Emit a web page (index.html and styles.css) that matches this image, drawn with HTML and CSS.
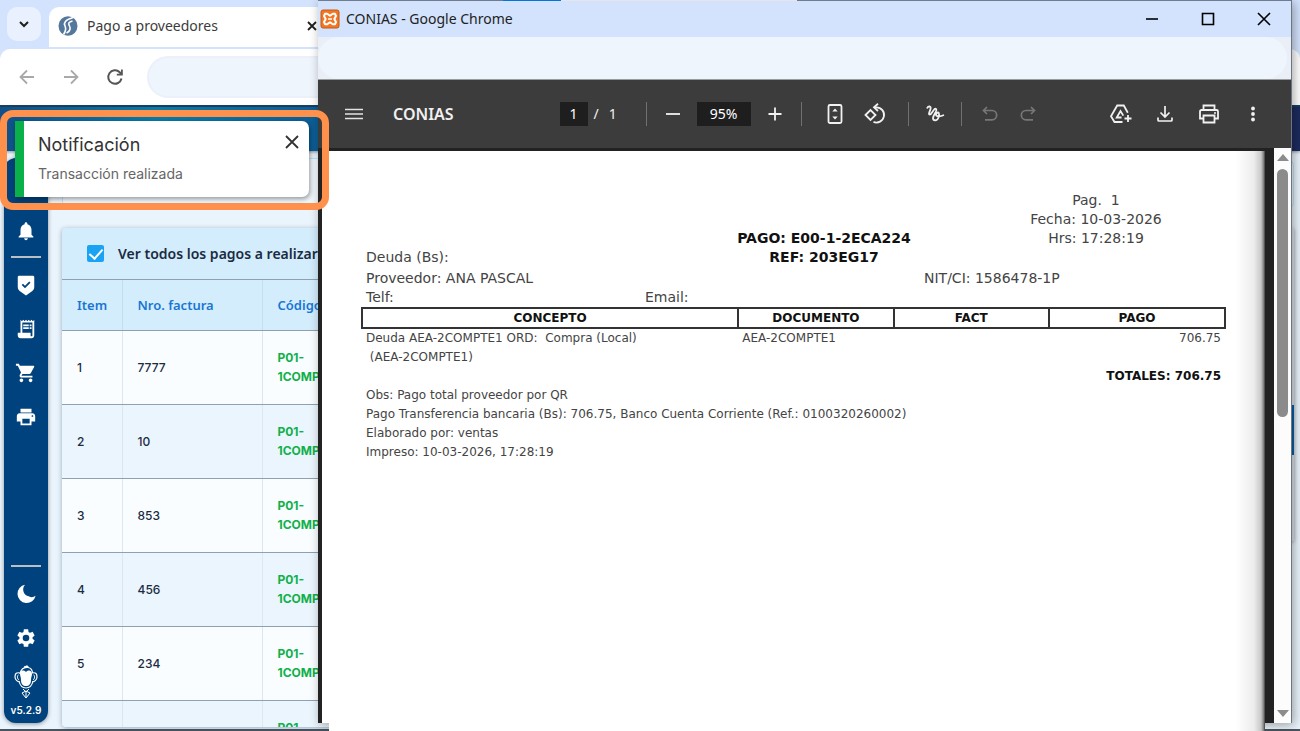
FILE: index.html
```html
<!DOCTYPE html>
<html lang="es">
<head>
	<meta charset="UTF-8">
	<title>Pago a proveedores</title>
	<link rel="stylesheet" href="styles.css">
</head>
<body>
	<div class="desktop">

		<!-- main browser window -->
		<div class="browser">
			<div class="tabstrip">
				<button class="tab-search" aria-label="Buscar"><svg width="12" height="12" viewBox="0 0 12 12"><path d="M2 4l4 4 4-4" fill="none" stroke="#1f1f1f" stroke-width="2"/></svg></button>
				<div class="tab">
					<svg width="20" height="20" viewBox="0 0 20 20">
						<ellipse cx="10" cy="10" rx="9.5" ry="9.8" fill="#54779c"/>
						<path d="M15 1.500C7 4 5.500 7 7 10c1.200 2.500 1 5-1.500 8.500" fill="none" stroke="#fff" stroke-width="1.600"/>
						<path d="M14.500 5C10.500 6 10 7.500 11.500 10c1.500 3 0 5.500-3 7" fill="none" stroke="#fff" stroke-width="1.600"/>
					</svg>
					<span class="tab-title">Pago a proveedores</span>
					<button class="tab-close" aria-label="Cerrar"><svg width="10" height="10" viewBox="0 0 10 10"><path d="M1 1l8 8M9 1L1 9" stroke="#1f1f1f" stroke-width="1.800"/></svg></button>
				</div>
			</div>
			<div class="navbar">
				<button aria-label="Atrás"><svg width="16" height="16" viewBox="0 0 16 16"><path d="M15 8H2M8 1.500L1.500 8 8 14.500" fill="none" stroke="#a9a9a9" stroke-width="1.800"/></svg></button>
				<button aria-label="Adelante"><svg width="16" height="16" viewBox="0 0 16 16"><path d="M1 8h13M8 1.500L14.500 8 8 14.500" fill="none" stroke="#a9a9a9" stroke-width="1.800"/></svg></button>
				<button aria-label="Recargar"><svg width="18" height="18" viewBox="0 0 18 18"><path d="M15.500 10.500A6.700 6.700 0 1 1 13.700 4.300L15 5.700" fill="none" stroke="#555" stroke-width="2"/><path d="M16.800 1.500v6h-6v-1.800h4.200V1.500z" fill="#555"/></svg></button>
				<input class="address" type="text" aria-label="Dirección">
			</div>

			<div class="app">
				<div class="app-header"></div>
				<div class="app-body">
					<nav class="sidebar">
						<button aria-label="Notificaciones"><svg viewBox="0 0 24 24"><path d="M12 22c1.100 0 2-.9 2-2h-4c0 1.100.89 2 2 2zm6-6v-5c0-3.070-1.640-5.640-4.500-6.320V4c0-.83-.67-1.500-1.500-1.500s-1.500.67-1.500 1.500v.68C7.630 5.360 6 7.920 6 11v5l-2 2v1h16v-1l-2-2z"/></svg></button>
						<hr>
						<button aria-label="Seguridad"><svg viewBox="0 0 24 24"><path fill-rule="evenodd" d="M12 23.500l-5-3.500C4 18 3 17 3 14V3.500C3 2.700 3.700 2 4.500 2h15c.8 0 1.500.7 1.500 1.500V14c0 3-1 4-4 6zM10.900 15.500l6-6-1.400-1.400-4.600 4.600-2.200-2.200-1.400 1.400z"/></svg></button>
						<button aria-label="Facturas"><svg viewBox="0 0 24 24"><path d="M19.500 3.500L18 2l-1.500 1.500L15 2l-1.500 1.500L12 2l-1.500 1.500L9 2 7.500 3.500 6 2v14H3v3c0 1.660 1.340 3 3 3h12c1.660 0 3-1.340 3-3V2l-1.500 1.500zM19 19c0 .55-.45 1-1 1s-1-.45-1-1v-3H8V5h11v14z"/><path d="M9 7h6v2H9zM16 7h2v2h-2zM9 10h6v2H9zM16 10h2v2h-2z"/></svg></button>
						<button aria-label="Compras"><svg viewBox="0 0 24 24"><path d="M7 18c-1.100 0-1.990.9-1.990 2S5.900 22 7 22s2-.9 2-2-.9-2-2-2zM1 2v2h2l3.600 7.590-1.350 2.450c-.16.28-.25.61-.25.96 0 1.100.9 2 2 2h12v-2H7.420c-.14 0-.25-.11-.25-.25l.03-.12.9-1.630h7.450c.75 0 1.410-.41 1.750-1.030l3.580-6.490c.08-.14.12-.31.12-.48 0-.55-.45-1-1-1H5.210l-.94-2H1zm16 16c-1.100 0-1.990.9-1.990 2s.89 2 1.990 2 2-.9 2-2-.9-2-2-2z"/></svg></button>
						<button aria-label="Imprimir"><svg viewBox="0 0 24 24"><path d="M19 8H5c-1.660 0-3 1.340-3 3v6h4v4h12v-4h4v-6c0-1.660-1.340-3-3-3zm-3 11H8v-5h8v5zm3-7c-.55 0-1-.45-1-1s.45-1 1-1 1 .45 1 1-.45 1-1 1zm-1-9H6v4h12V3z"/></svg></button>
						<div class="sidebar-bottom">
							<hr>
							<button aria-label="Tema oscuro"><svg viewBox="0 0 24 24"><path d="M11 2a10 10 0 1 0 11.500 12 6.500 6.500 0 0 1-7.500.5A7.500 7.500 0 0 1 11 2z"/></svg></button>
							<button aria-label="Ajustes"><svg viewBox="0 0 24 24"><path fill-rule="evenodd" d="M19.140 12.940c.04-.3.06-.61.06-.94 0-.32-.02-.64-.07-.94l2.030-1.580c.18-.14.23-.41.12-.61l-1.920-3.320c-.12-.22-.37-.29-.59-.22l-2.390.96c-.5-.38-1.030-.7-1.620-.94l-.36-2.540c-.04-.24-.24-.41-.48-.41h-3.840c-.24 0-.43.17-.47.41l-.36 2.540c-.59.24-1.130.57-1.620.94l-2.390-.96c-.22-.08-.47 0-.59.22L2.740 8.870c-.12.21-.08.47.12.61l2.030 1.580c-.05.3-.09.63-.09.94s.02.64.07.94l-2.030 1.580c-.18.14-.23.41-.12.61l1.920 3.320c.12.22.37.29.59.22l2.390-.96c.5.38 1.030.7 1.620.94l.36 2.540c.05.24.24.41.48.41h3.840c.24 0 .44-.17.47-.41l.36-2.540c.59-.24 1.130-.56 1.620-.94l2.390.96c.22.08.47 0 .59-.22l1.920-3.320c.12-.22.07-.47-.12-.61zM12 15.600a3.600 3.600 0 1 1 0-7.200 3.600 3.600 0 0 1 0 7.200z"/></svg></button>
							<svg class="monkey" viewBox="0 0 24 34">
								<path d="M6 9C7 4 10 2 14 2.500c3 .5 4.500 3 4.500 6M10 2l3-1 1.500 1.500M6 8c-4-1-5 1-5 4s3 5 5 5M18 8c4-1 5 1 5 4s-3 5-5 5M5 16c1 5 4 7 7 7s6-2 7-7" fill="none" stroke="#fff" stroke-width="1.200"/>
								<path d="M4.500 10C3 10 3 14 5 15M19.500 10c1.500 0 1.500 4-.5 5" fill="none" stroke="#fff"/>
								<path d="M12 7c3-3 6-1 6 2 0 2-1 3-1 6 0 4-2 6-5 6s-5-2-5-6c0-3-1-4-1-6 0-3 3-5 6-2z" fill="#fff"/>
								<path d="M9 24l3 3 3-3M8 28l4-2 4 2-4 5zM12 26v7" fill="none" stroke="#fff"/>
							</svg>
							<span class="version">v5.2.9</span>
						</div>
					</nav>

					<main class="content">
						<div class="filters"></div>
						<div class="panels">
							<div class="card">
								<div class="card-top">
									<input type="checkbox" id="ver_todos" checked>
									<label for="ver_todos">Ver todos los pagos a realizar</label>
								</div>
								<table class="pagos">
									<thead>
										<tr><th class="col_item">Item</th><th class="col_nro">Nro. factura</th><th>Código</th></tr>
									</thead>
									<tbody>
										<tr><td>1</td><td>7777</td><td class="codigo">P01-<br>1COMPTE</td></tr>
										<tr><td>2</td><td>10</td><td class="codigo">P01-<br>1COMPTE</td></tr>
										<tr><td>3</td><td>853</td><td class="codigo">P01-<br>1COMPTE</td></tr>
										<tr><td>4</td><td>456</td><td class="codigo">P01-<br>1COMPTE</td></tr>
										<tr><td>5</td><td>234</td><td class="codigo">P01-<br>1COMPTE</td></tr>
										<tr><td></td><td></td><td class="codigo">P01-<br>1COMPTE</td></tr>
									</tbody>
								</table>
							</div>
							<div class="side-card"><div class="side-bar"></div></div>
						</div>
					</main>
				</div>
			</div>
		</div>

		<!-- pop-up window with the receipt -->
		<div class="popup">
			<div class="edge"><i class="edge_1"></i><i class="edge_2"></i><i class="edge_3"></i><i class="edge_4"></i></div>
			<div class="titlebar">
				<svg width="20" height="20" viewBox="0 0 20 20">
					<rect x="1" y="1" width="18" height="18" rx="2" fill="#f37623" stroke="#c65b14"/>
					<path d="M5 4.800h2.200L10 6.800l2.800-2H15l1 2.200-1.700 3 1.700 3-1 2.200h-2.200l-2.800-2-2.800 2H5L4 13l1.700-3L4 7z" fill="none" stroke="#fff" stroke-width="2" stroke-linejoin="round"/>
					<path d="M8 10h4" stroke="#fff" stroke-width="1.500"/>
				</svg>
				<span class="window-title">CONIAS - Google Chrome</span>
				<div class="window-buttons">
					<button aria-label="Minimizar"><svg width="14" height="14" viewBox="0 0 14 14"><path d="M1 7h12" stroke="#000" stroke-width="1.600"/></svg></button>
					<button aria-label="Maximizar"><svg width="14" height="14" viewBox="0 0 14 14"><path d="M1.500 1.500h11v11h-11z" fill="none" stroke="#000" stroke-width="1.600"/></svg></button>
					<button aria-label="Cerrar"><svg width="14" height="14" viewBox="0 0 14 14"><path d="M1 1l12 12M13 1L1 13" stroke="#000" stroke-width="1.600"/></svg></button>
				</div>
			</div>
			<div class="popup-address"><input type="text" aria-label="Dirección"></div>

			<div class="pdf-toolbar">
				<div class="pdf-left">
					<button aria-label="Menú"><svg width="20" height="20" viewBox="0 0 20 20"><path d="M1 5.500h18M1 10h18M1 14.500h18" stroke="#e4e4e4" stroke-width="1.600"/></svg></button>
					<span class="pdf-title">CONIAS</span>
				</div>
				<div class="pdf-center">
					<div class="page-of"><input class="page-input" type="text" value="1" aria-label="Página"><span>/</span><span>1</span></div>
					<i class="sep"></i>
					<div class="zoom">
						<button aria-label="Alejar"><svg width="20" height="20" viewBox="0 0 20 20"><path d="M3 10h14" stroke="#f1f1f1" stroke-width="1.800"/></svg></button>
						<input class="zoom-input" type="text" value="95%" aria-label="Zoom">
						<button aria-label="Acercar"><svg width="20" height="20" viewBox="0 0 20 20"><path d="M3.500 10h13M10 3.500v13" stroke="#f1f1f1" stroke-width="1.800"/></svg></button>
					</div>
					<i class="sep"></i>
					<div class="fit">
						<button aria-label="Ajustar a la página"><svg width="20" height="22" viewBox="0 0 20 22"><rect x="3.500" y="2" width="13" height="18" rx="1.500" fill="none" stroke="#f1f1f1" stroke-width="1.800"/><path d="M7.300 8.500L10 5.500l2.700 3zM7.300 13.500l2.700 3 2.700-3z" fill="#f1f1f1"/></svg></button>
						<button aria-label="Girar"><svg width="22" height="22" viewBox="0 0 22 22"><path d="M1.500 12l5-5 5 5-5 5z" fill="none" stroke="#f1f1f1" stroke-width="1.800"/><path d="M10 4.300h2.500a7.600 7.600 0 1 1-3 14.600" fill="none" stroke="#f1f1f1" stroke-width="1.800"/><path d="M14 .8L10 4.300l4 3.700" fill="none" stroke="#f1f1f1" stroke-width="1.800"/></svg></button>
					</div>
					<i class="sep"></i>
					<button aria-label="Dibujar"><svg width="20" height="20" viewBox="0 0 20 20"><path d="M2 4.500C3 1.500 6.500 2 5.500 5S3 11 5 10.500 9 3.500 11 5 8 11 8 14s4 3.500 5.500-.5S13.500 7 11.500 9.500s2 4 7.500 1.500" fill="none" stroke="#f1f1f1" stroke-width="1.800"/></svg></button>
					<i class="sep"></i>
					<div class="history">
						<button aria-label="Deshacer" disabled><svg width="18" height="18" viewBox="0 0 18 18"><path d="M6 2L2.500 5.500 6 9M2.500 5.500H11a4.600 4.600 0 0 1 0 9.300H4" fill="none" stroke="#777" stroke-width="1.700"/></svg></button>
						<button aria-label="Rehacer" disabled><svg width="18" height="18" viewBox="0 0 18 18"><path d="M12 2l3.500 3.500L12 9M15.500 5.500H7a4.600 4.600 0 0 0 0 9.300h7" fill="none" stroke="#777" stroke-width="1.700"/></svg></button>
					</div>
				</div>
				<div class="pdf-right">
					<button aria-label="Guardar en Drive"><svg width="24" height="22" viewBox="0 0 24 22"><path d="M13.500 19H5.500L2 13.300 8.200 2.500h6.600l4 7.200M12.500 14.500H7.700L11.500 8l2.800 4.600" fill="none" stroke="#f1f1f1" stroke-width="1.800"/><path d="M19 12v7M15.500 15.500h7" stroke="#f1f1f1" stroke-width="1.800"/></svg></button>
					<button aria-label="Descargar"><svg width="20" height="20" viewBox="0 0 20 20"><path d="M10 2v11M5.500 8.500L10 13l4.500-4.500M3 13.500v2.500q0 1 1 1h12q1 0 1-1v-2.500" fill="none" stroke="#f1f1f1" stroke-width="1.700"/></svg></button>
					<button aria-label="Imprimir"><svg width="22" height="22" viewBox="0 0 22 22"><path d="M5.500 7V2.500h11V7M5.500 15.500H2V8.500q0-1.500 1.500-1.500h15q1.500 0 1.500 1.500v7h-3.500M5.500 12.500h11v7h-11z" fill="none" stroke="#f1f1f1" stroke-width="1.800"/><circle cx="17" cy="10" r="1" fill="#f1f1f1"/></svg></button>
					<button aria-label="Más"><svg width="20" height="20" viewBox="0 0 20 20"><circle cx="10" cy="4.500" r="1.900" fill="#f1f1f1"/><circle cx="10" cy="10" r="1.900" fill="#f1f1f1"/><circle cx="10" cy="15.500" r="1.900" fill="#f1f1f1"/></svg></button>
				</div>
			</div>

			<div class="viewer">
				<div class="viewer-page">
					<div class="paper">
						<div class="doc-head">
							<span class="doc-right">Pag. &nbsp;1</span>
							<span class="doc-right">Fecha: 10-03-2026</span>
							<b>PAGO: E00-1-2ECA224</b>
							<span class="doc-right">Hrs: 17:28:19</span>
							<span class="doc-left">Deuda (Bs):</span>
							<b>REF: 203EG17</b>
						</div>
						<div class="doc-supplier"><span>Proveedor: ANA PASCAL</span><span>NIT/CI: 1586478-1P</span></div>
						<div class="doc-contact"><span>Telf:</span><span>Email:</span></div>
						<table class="recibo">
							<thead>
								<tr><th class="col_concepto">CONCEPTO</th><th class="col_doc">DOCUMENTO</th><th class="col_doc">FACT</th><th>PAGO</th></tr>
							</thead>
							<tbody>
								<tr><td>Deuda AEA-2COMPTE1 ORD: &nbsp;Compra (Local)<br>&nbsp;(AEA-2COMPTE1)</td><td>AEA-2COMPTE1</td><td></td><td class="monto">706.75</td></tr>
								<tr><td colspan="4" class="monto"><b>TOTALES: 706.75</b></td></tr>
							</tbody>
						</table>
						<div class="doc-notes">
							<div>Obs: Pago total proveedor por QR</div>
							<div>Pago Transferencia bancaria (Bs): 706.75, Banco Cuenta Corriente (Ref.: 0100320260002)</div>
							<div>Elaborado por: ventas</div>
							<div>Impreso: 10-03-2026, 17:28:19</div>
						</div>
					</div>
				</div>
				<div class="scrollbar">
					<i class="arrow_up"></i>
					<div class="thumb"></div>
					<i class="arrow_down"></i>
				</div>
			</div>
		</div>

		<!-- notification -->
		<div class="highlight"></div>
		<div class="toast" role="alert">
			<div class="toast-text">
				<div class="toast-title">Notificación</div>
				<div class="toast-msg">Transacción realizada</div>
			</div>
			<button aria-label="Cerrar"><svg width="14" height="14" viewBox="0 0 14 14"><path d="M1 1l12 12M13 1L1 13" stroke="#333" stroke-width="1.800"/></svg></button>
		</div>
	</div>
</body>
</html>
```
FILE: styles.css
```css
* {
	box-sizing: border-box;
}
body {
	margin: 0;
	font-family: Inter, "Liberation Sans", sans-serif;
	font-size: 12px;
	color: #1b2b42;
}
button {
	display: flex;
	align-items: center;
	justify-content: center;
	padding: 0;
	border: 0;
	background: none;
}
input {
	font: inherit;
	border: 0;
	padding: 0;
	margin: 0;
}
svg {
	display: block;
	flex: none;
}
.desktop {
	position: relative;
	height: 100vh;
	min-height: 700px;
	overflow: hidden;
	background: #d3e3fd;
}

/* main browser window */
.browser {
	display: flex;
	flex-direction: column;
	height: 100%;
	border-bottom: 2px solid #4a545e;
}
.tabstrip {
	display: flex;
	height: 49px;
	padding: 7px 8px 2px 7px;
	gap: 8px;
}
.tab-search {
	width: 34px;
	height: 34px;
	border-radius: 10px;
	background: #e9f1fe;
}
.tab {
	display: flex;
	align-items: center;
	width: 278px;
	padding: 0 10px 2px 9px;
	gap: 9px;
	border-radius: 10px 10px 0 0;
	background: #fff;
	font: 14px/20px "Noto Sans", sans-serif;
	color: #3c3c3c;
}
.tab-title {
	flex: 1;
}
.navbar {
	display: flex;
	align-items: center;
	height: 56px;
	padding: 0 8px 0 15px;
	gap: 20px;
	border-radius: 10px 10px 0 0;
	background: #fff;
}
.navbar button {
	width: 24px;
	height: 24px;
}
.address {
	flex: 1;
	height: 42px;
	border-radius: 21px;
	background: #eef5fd;
	border: 2px solid #ebf0fa;
}
.app {
	display: flex;
	flex-direction: column;
	flex: 1;
	min-height: 0;
	border-top: 2px solid #1a4264;
	background: #eaf4fc;
}
.app-header {
	flex: none;
	height: 44px;
	background: linear-gradient(90deg, #115089, #087ba6 12%, #0c5f97 24%, #1c2b5e);
	box-shadow: 0 1px 3px rgba(0, 0, 0, .4);
}
.app-body {
	display: flex;
	flex: 1;
	min-height: 0;
	padding: 7px 6px 0 4px;
	gap: 14px;
}
.sidebar {
	display: flex;
	flex-direction: column;
	align-items: center;
	width: 44px;
	margin-bottom: 6px;
	padding: 62px 0 5px;
	border-radius: 12px;
	background: #00427d;
	box-shadow: 0 1px 4px rgba(0, 0, 0, .4);
}
.sidebar button {
	width: 22px;
	height: 22px;
	margin-bottom: 22px;
}
.sidebar button svg {
	width: 22px;
	height: 22px;
	fill: #fff;
}
.sidebar hr {
	width: 30px;
	height: 2px;
	margin: -8px 0 16px;
	border: 0;
	background: #b9bfc4;
}
.sidebar-bottom {
	display: flex;
	flex-direction: column;
	align-items: center;
	margin-top: auto;
}
.monkey {
	width: 24px;
	height: 34px;
	margin-top: -6px;
}
.version {
	margin-top: 3px;
	font-size: 10px;
	line-height: 16px;
	font-weight: 600;
	color: #fff;
}
.content {
	display: flex;
	flex-direction: column;
	flex: 1;
	min-width: 0;
	gap: 18px;
}
.filters {
	flex: none;
	height: 52px;
	border: 1px solid #bfe4fa;
	border-radius: 8px;
	background: #f1f8fe;
}
.panels {
	display: flex;
	align-items: flex-start;
	flex: 1;
	min-height: 0;
	gap: 16px;
	margin-bottom: 2px;
}
.card {
	flex: 1;
	height: 100%;
	overflow: hidden;
	border-radius: 4px;
	background: #d3edfd;
	box-shadow: 0 1px 5px rgba(30, 60, 90, .4);
}
.card-top {
	display: flex;
	align-items: center;
	height: 52px;
	padding: 0 25px;
	gap: 14px;
	font: 600 14px/20px "Noto Sans", sans-serif;
	border-bottom: 1px solid #8fa0b0;
}
.card-top input {
	display: flex;
	justify-content: center;
	width: 17px;
	height: 17px;
	appearance: none;
	border-radius: 2px;
	background: #1ba3f3;
}
.card-top input::after {
	content: "";
	width: 6px;
	height: 11px;
	margin-top: 1px;
	border: solid #fff;
	border-width: 0 2px 2px 0;
	transform: rotate(42deg);
}
.pagos {
	width: 100%;
	table-layout: fixed;
	border-collapse: collapse;
}
.pagos th, .pagos td {
	height: 74px;
	padding: 0 15px;
	text-align: left;
	border-right: 1px solid #dde7ef;
	border-bottom: 1px solid #8fa0b0;
}
.pagos th {
	height: 50px;
	font: 600 13px/20px "Noto Sans", sans-serif;
	color: #1976d2;
	border-right-color: #c5dff0;
}
.pagos td {
	line-height: 19px;
	font-weight: 500;
	background: #f9fdff;
}
.pagos tr:nth-child(even) td {
	background: #ebf5fd;
}
.pagos .codigo {
	font-weight: 700;
	color: #10b04b;
}
.col_item {
	width: 60px;
}
.col_nro {
	width: 140px;
}
.side-card {
	width: 300px;
	height: 313px;
	padding-top: 177px;
	background: #dde3e8;
	box-shadow: 0 1px 4px rgba(0, 0, 0, .3);
}
.side-bar {
	height: 50px;
	background: #0b5ea8;
}

/* pop-up window */
.popup {
	position: absolute;
	top: 0;
	left: 318px;
	right: 8px;
	bottom: 8px;
	display: flex;
	flex-direction: column;
	background: #d3e2fd;
	border-right: 1px solid #6c7680;
	box-shadow: 2px 2px 10px rgba(0, 0, 0, .35);
}
.edge {
	display: flex;
	height: 1px;
}
.edge_1 {
	flex: 185;
	background: #6f7c90;
}
.edge_2 {
	flex: 58;
	background: #0078d7;
}
.edge_3 {
	flex: 236;
	background: #e4e6ea;
}
.edge_4 {
	flex: 494;
	background: #6f7c90;
}
.titlebar {
	display: flex;
	align-items: center;
	height: 36px;
	padding-left: 2px;
	gap: 6px;
	font: 14px/20px "Noto Sans", sans-serif;
	color: #222;
}
.window-title {
	flex: 1;
}
.window-buttons {
	display: flex;
	gap: 32px;
	padding-right: 15px;
}
.window-buttons button {
	width: 24px;
	height: 24px;
}
.popup-address {
	height: 43px;
	padding-right: 4px;
	background: #e9eef7;
	border-bottom: 1px solid #999c9f;
}
.popup-address input {
	display: block;
	width: 100%;
	height: 42px;
	border-radius: 21px;
	background: #eef5fd;
}
.pdf-toolbar {
	display: flex;
	align-items: center;
	height: 68px;
	background: #3c3c3c;
	color: #f1f1f1;
	font: 14px/24px "Noto Sans", sans-serif;
}
.pdf-toolbar button {
	width: 24px;
	height: 24px;
}
.pdf-left, .pdf-right, .pdf-center, .page-of, .zoom, .fit, .history {
	display: flex;
	align-items: center;
}
.pdf-left {
	flex: 1;
	gap: 27px;
	padding-left: 24px;
}
.pdf-title {
	font-weight: 600;
	font-size: 16px;
}
.pdf-center {
	padding-right: 8px;
}
.pdf-right {
	flex: 1;
	justify-content: flex-end;
	gap: 20px;
	padding-right: 26px;
}
.page-of {
	width: 72px;
	gap: 6px;
}
.page-of span:last-child {
	margin-left: 4px;
}
.page-input, .zoom-input {
	height: 24px;
	background: #1e1e1e;
	color: #fff;
	text-align: center;
}
.page-input {
	width: 28px;
}
.zoom-input {
	width: 54px;
}
.sep {
	width: 1px;
	height: 24px;
	margin: 0 14px;
	background: #707070;
}
.zoom {
	gap: 12px;
}
.fit {
	gap: 16px;
	padding: 0 7px;
}
.history {
	gap: 14px;
	padding-left: 2px;
}
.viewer {
	display: flex;
	flex: 1;
	min-height: 0;
	background: #222;
}
.viewer-page {
	display: flex;
	flex: 1;
	margin: 3px 9px 0 4px;
	padding-left: 7px;
	background: #fff;
}
.paper {
	flex: 1;
	margin-bottom: -8px;
	padding: 40px 38px 0 32px;
	background: linear-gradient(270deg, #777, #c8c8c8 3px, #ececec 10px, #fff 28px);
	border-right: 1px solid #555;
	font: 12px/19px "DejaVu Sans", Verdana, sans-serif;
	color: #444;
}
.paper b, .paper th {
	color: #111;
}
.doc-head, .doc-supplier, .doc-contact {
	display: grid;
	font-size: 14px;
}
.doc-head {
	grid-template-columns: 363fr 200fr 42fr 260fr;
}
.doc-head b {
	grid-column: 2;
	text-align: center;
}
.doc-right {
	grid-column: 4;
	text-align: center;
}
.doc-left {
	grid-column: 1;
	padding-left: 5px;
}
.doc-supplier {
	grid-template-columns: 558fr 302fr;
	padding: 2px 0 0 5px;
}
.doc-contact {
	grid-template-columns: 279fr 581fr;
	padding-left: 5px;
}
.recibo {
	width: 100%;
	table-layout: fixed;
	border-collapse: collapse;
}
.recibo th {
	height: 20px;
	padding: 0;
	border: 2px solid #333;
	line-height: 17px;
}
.recibo td {
	padding: 0 4px;
	vertical-align: top;
}
.col_concepto {
	width: 43.6%;
}
.col_doc {
	width: 18%;
}
.recibo .monto {
	text-align: right;
}
.doc-notes {
	padding-left: 5px;
}
.scrollbar {
	display: flex;
	flex-direction: column;
	align-items: center;
	width: 17px;
	padding: 6px 0;
	background: #fcfcfc;
}
.thumb {
	width: 11px;
	height: 44%;
	margin-top: 8px;
	border-radius: 6px;
	background: #8b8b8b;
}
.arrow_up, .arrow_down {
	border: 6px solid transparent;
	border-top-width: 0;
	border-bottom: 7px solid #8b8b8b;
}
.arrow_down {
	margin-top: auto;
	border-top: 7px solid #8b8b8b;
	border-bottom-width: 0;
}

/* notification */
.highlight {
	position: absolute;
	top: 110px;
	left: 0;
	width: 329px;
	height: 100px;
	border: 7px solid #ff914d;
	border-radius: 13px;
}
.toast {
	position: absolute;
	top: 121px;
	left: 15px;
	display: flex;
	align-items: flex-start;
	justify-content: space-between;
	width: 294px;
	height: 76px;
	padding: 12px 10px 12px 14px;
	border-left: 9px solid #0ab14b;
	border-radius: 0 7px 7px 0;
	background: #fff;
	box-shadow: 1px 2px 5px rgba(0, 0, 0, .4);
}
.toast button {
	width: 14px;
	height: 18px;
}
.toast-title {
	font-size: 18px;
	line-height: 24px;
	color: #333;
}
.toast-msg {
	margin-top: 6px;
	font-size: 14px;
	line-height: 22px;
	color: #666;
}
```
